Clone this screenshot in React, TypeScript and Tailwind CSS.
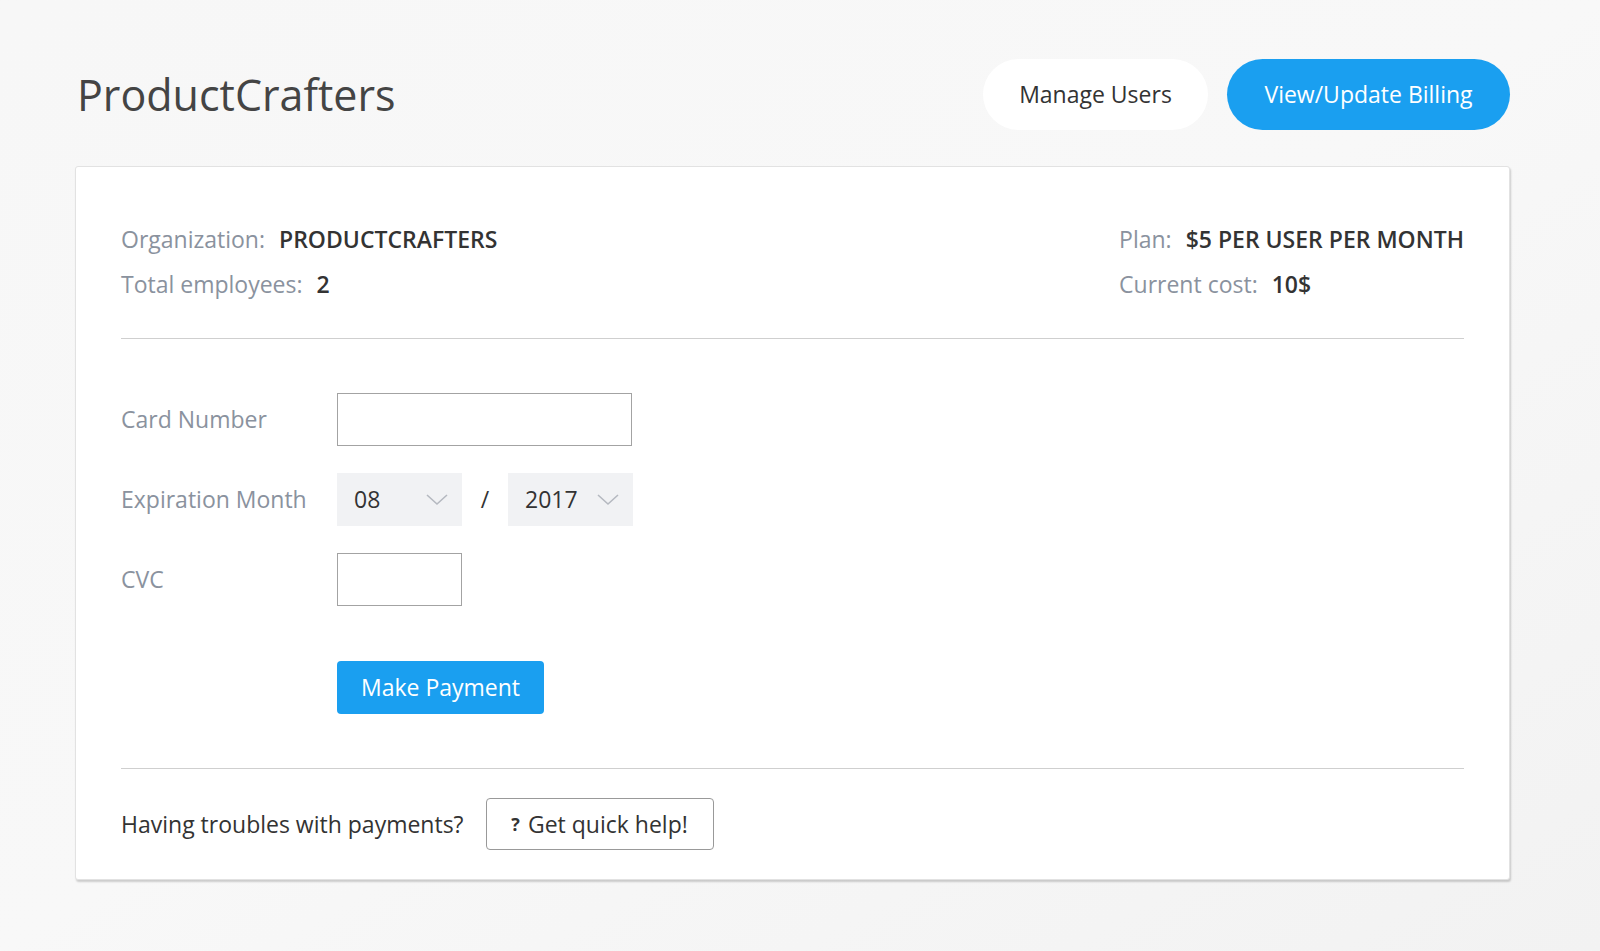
import React from "react";

function Chevron() {
  return (
    <svg width="22" height="12" viewBox="0 0 22 12" fill="none" className="shrink-0">
      <polyline points="1,1 11,10 21,1" stroke="#b5b9c0" strokeWidth="1.6" />
    </svg>
  );
}

function Select({ value }: { value: string }) {
  return (
    <div className="flex h-[53px] w-[125px] items-center justify-between bg-[#f1f2f4] pl-[17px] pr-[14px] text-[23px] text-[#333]">
      <span>{value}</span>
      <Chevron />
    </div>
  );
}

function InfoRow({ label, value }: { label: string; value: string }) {
  return (
    <div className="flex h-[45px] items-center gap-[14px]">
      <span className="text-[#8a929e]">{label}</span>
      <span className="font-semibold text-[#333]">{value}</span>
    </div>
  );
}

export default function App() {
  return (
    <div className="min-h-screen bg-gradient-to-br from-[#f7f7f7] via-[#f8f8f8] to-[#f2f2f2] font-['Open_Sans',sans-serif] text-[#333]">
      <div className="pl-[75px] pr-[90px] pt-[59px] pb-[70px]">
        <header className="flex h-[71px] items-center justify-between">
          <h1 className="ml-[2px] mt-[2px] text-[43px] text-[#444]">ProductCrafters</h1>
          <div className="flex gap-[19px]">
            <button className="h-[71px] w-[225px] rounded-full bg-white text-[23px] text-[#333]">
              Manage Users
            </button>
            <button className="h-[71px] w-[283px] rounded-full bg-[#1a9ff0] text-[23px] text-white">
              View/Update Billing
            </button>
          </div>
        </header>

        <section className="mt-[36px] rounded-[3px] border border-[#e2e2e2] bg-white px-[45px] pt-[50px] pb-[29px] text-[23px] shadow-[1px_2px_2px_rgba(0,0,0,0.18)]">
          <div className="flex justify-between">
            <div>
              <InfoRow label="Organization:" value="PRODUCTCRAFTERS" />
              <InfoRow label="Total employees:" value="2" />
            </div>
            <div>
              <InfoRow label="Plan:" value="$5 PER USER PER MONTH" />
              <InfoRow label="Current cost:" value="10$" />
            </div>
          </div>

          <div className="mt-[31px] border-t border-[#cfcfcf]" />

          <div className="grid grid-cols-[216px_1fr] items-center gap-y-[27px] pt-[54px] text-[#8a929e]">
            <label>Card Number</label>
            <input className="h-[53px] w-[295px] border border-[#a3a3a3] bg-white outline-none" />

            <label>Expiration Month</label>
            <div className="flex items-center text-[#333]">
              <Select value="08" />
              <span className="w-[46px] text-center">/</span>
              <Select value="2017" />
            </div>

            <label>CVC</label>
            <input className="h-[53px] w-[125px] border border-[#a3a3a3] bg-white outline-none" />

            <div />
            <button className="mt-[28px] h-[53px] w-[207px] rounded-[4px] bg-[#1a9ff0] text-[23px] text-white">
              Make Payment
            </button>
          </div>

          <div className="mt-[54px] border-t border-[#cfcfcf]" />

          <div className="flex items-center gap-[22px] pt-[29px]">
            <span className="text-[#333]">Having troubles with payments?</span>
            <button className="flex h-[52px] w-[228px] items-center justify-center gap-[8px] rounded-[4px] border border-[#999] bg-white text-[23px] text-[#333]">
              <span className="text-[18px] font-bold">?</span>
              <span>Get quick help!</span>
            </button>
          </div>
        </section>
      </div>
    </div>
  );
}
